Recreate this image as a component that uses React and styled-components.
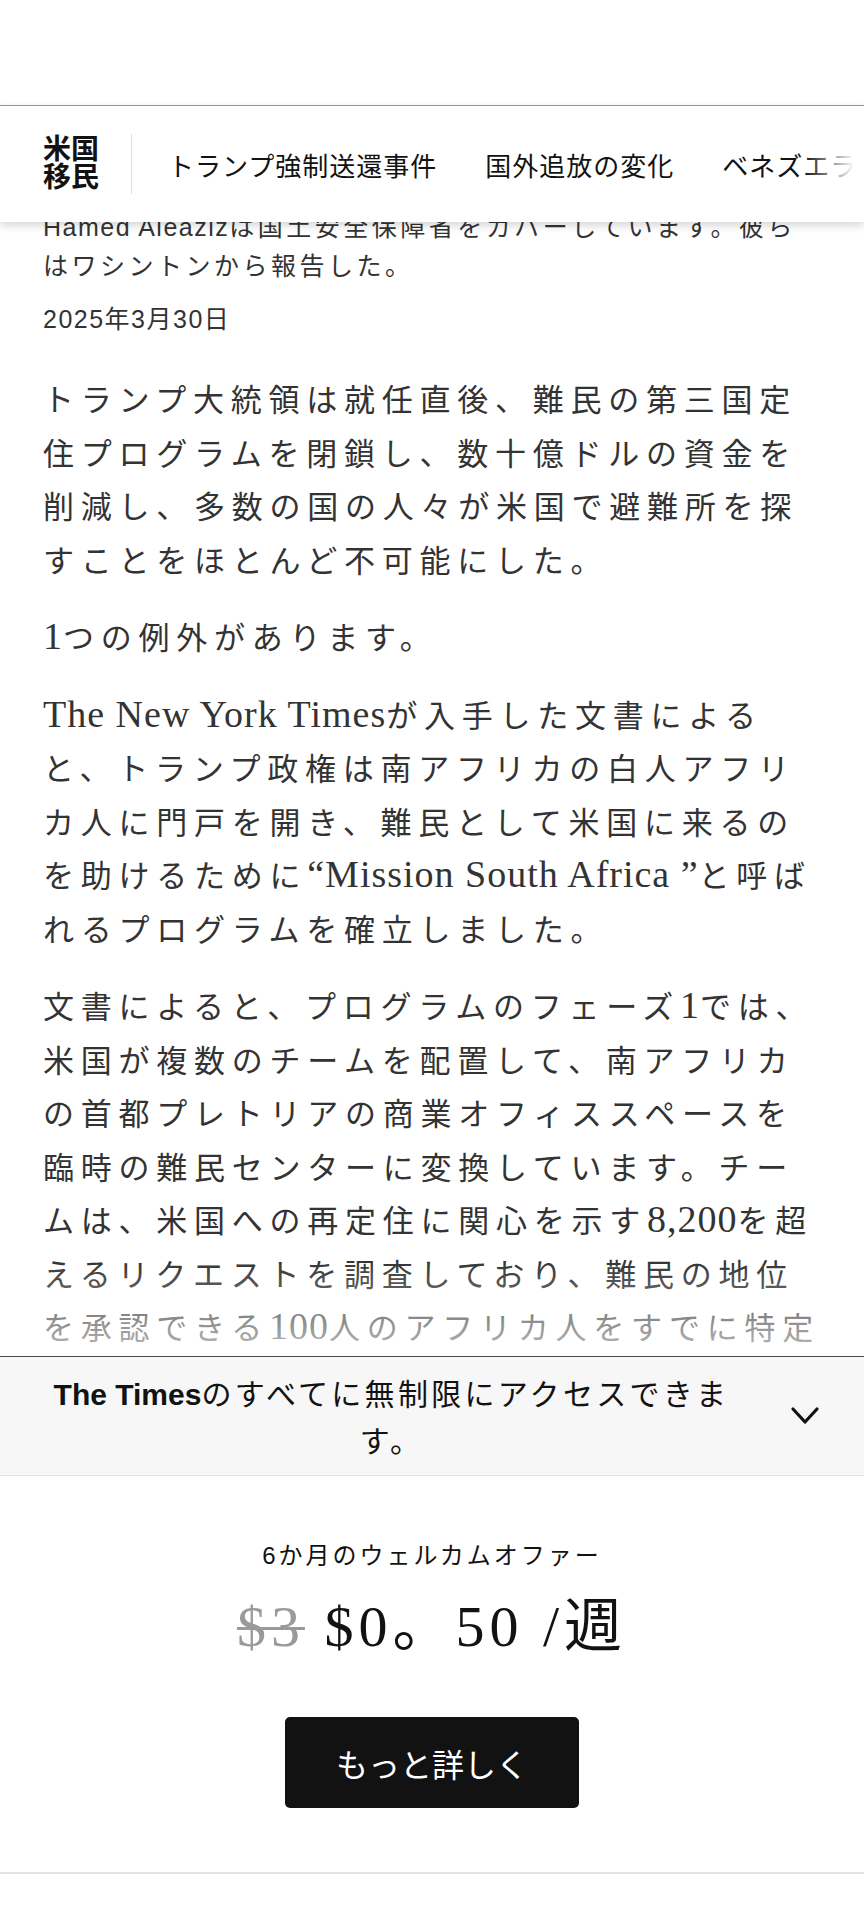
import React from "react";
import styled, { createGlobalStyle } from "styled-components";

const Global = createGlobalStyle`
  html, body { margin: 0; padding: 0; background: #fff; }
  body {
    font-family: "Liberation Sans", "Noto Sans CJK JP", sans-serif;
    color: #121212;
  }
  * { box-sizing: border-box; }
`;

const Page = styled.div`
  width: 864px;
  height: 1920px;
  overflow: hidden;
  display: flex;
  flex-direction: column;
  background: #fff;
`;

const TopSpace = styled.div`
  height: 106px;
  flex-shrink: 0;
  border-bottom: 1px solid #9a9a9a;
`;

const Header = styled.header`
  position: relative;
  z-index: 2;
  height: 116px;
  flex-shrink: 0;
  display: flex;
  align-items: center;
  padding-left: 43px;
  background: #fff;
  box-shadow: 0 3px 9px rgba(0, 0, 0, 0.18);
  overflow: hidden;
  &::after {
    content: "";
    position: absolute;
    top: 0;
    right: 0;
    bottom: 0;
    width: 60px;
    background: linear-gradient(to right, rgba(255, 255, 255, 0), #fff 85%);
  }
`;

const Logo = styled.div`
  font-family: "Noto Sans CJK JP", sans-serif;
  font-weight: 700;
  font-size: 28px;
  line-height: 28px;
  color: #121212;
  flex-shrink: 0;
  margin-top: -6px;
`;

const Divider = styled.div`
  width: 1px;
  height: 60px;
  background: #dcdcdc;
  margin: 0 36px 0 32px;
  flex-shrink: 0;
`;

const Nav = styled.nav`
  display: flex;
  gap: 48px;
  white-space: nowrap;
`;

const NavItem = styled.span`
  font-family: "Noto Sans CJK JP", sans-serif;
  font-size: 26px;
  letter-spacing: 1px;
  color: #121212;
`;

const Article = styled.main`
  position: relative;
  height: 1134px;
  flex-shrink: 0;
  overflow: hidden;
`;

const ArticleInner = styled.div`
  padding: 0 40px 0 43px;
  margin-top: -14px;
`;

const Byline = styled.p`
  margin: 0;
  font-size: 25px;
  line-height: 39px;
  letter-spacing: 3.5px;
  color: #333;
`;

const BylineLatin = styled.span`
  letter-spacing: 1.5px;
`;

const DateLine = styled.p`
  margin: 18px 0 0;
  font-size: 25px;
  line-height: 30px;
  letter-spacing: 1.5px;
  color: #333;
`;

const Paragraph = styled.p`
  margin: ${(p) => (p.$first ? "40px" : "24px")} 0 0;
  font-family: "Liberation Serif", "Noto Sans CJK JP", serif;
  font-weight: 400;
  font-size: 31px;
  line-height: 53.5px;
  letter-spacing: 6.75px;
  color: #333;
`;

const Latin = styled.span`
  font-family: "Liberation Serif", serif;
  font-weight: 400;
  font-size: 38px;
  line-height: 1;
  letter-spacing: 1px;
`;

const Fade = styled.div`
  position: absolute;
  left: 0;
  right: 0;
  bottom: 0;
  height: 95px;
  background: linear-gradient(
    to bottom,
    rgba(255, 255, 255, 0),
    rgba(255, 255, 255, 0.7)
  );
`;

const Paywall = styled.section`
  flex-shrink: 0;
  border-top: 1px solid #4a4a4a;
  background: #fff;
`;

const PaywallBar = styled.div`
  display: grid;
  grid-template-columns: 1fr 124px;
  align-items: center;
  background: #f7f7f7;
  border-bottom: 1px solid #e2e2e2;
  padding: 13px 0 13px 43px;
`;

const BarText = styled.p`
  margin: 0;
  text-align: center;
  font-family: "Noto Sans CJK JP", sans-serif;
  font-size: 30px;
  line-height: 45px;
  letter-spacing: 3.3px;
  color: #121212;
`;

const BarLatin = styled.span`
  font-family: "Liberation Sans", sans-serif;
  font-weight: 700;
  letter-spacing: 0;
`;

const Chevron = styled.svg`
  justify-self: center;
  margin-left: 6px;
`;

const Offer = styled.div`
  display: flex;
  flex-direction: column;
  align-items: center;
  padding: 65px 0 64px;
  border-bottom: 2px solid #e2e2e2;
`;

const OfferLabel = styled.p`
  margin: 0;
  font-family: "Liberation Sans", "Noto Sans CJK JP", sans-serif;
  font-size: 24px;
  line-height: 30px;
  letter-spacing: 3px;
  color: #121212;
`;

const Price = styled.p`
  margin: 21px 0 0;
  font-family: "Liberation Serif", "Noto Sans CJK JP", serif;
  font-size: 58px;
  line-height: 70px;
  letter-spacing: 5px;
  color: #121212;
  white-space: nowrap;
`;

const OldPrice = styled.s`
  color: #9a9a9a;
  text-decoration-thickness: 3px;
`;

const CtaButton = styled.button`
  margin-top: 55px;
  width: 294px;
  height: 91px;
  border: none;
  border-radius: 5px;
  background: #121212;
  color: #fff;
  font-family: "Noto Sans CJK JP", sans-serif;
  font-size: 32px;
  cursor: pointer;
`;

const navItems = ["トランプ強制送還事件", "国外追放の変化", "ベネズエラ人"];

export default function App() {
  return (
    <Page lang="ja">
      <Global />
      <TopSpace />
      <Header>
        <Logo>
          米国
          <br />
          移民
        </Logo>
        <Divider />
        <Nav>
          {navItems.map((n) => (
            <NavItem key={n}>{n}</NavItem>
          ))}
        </Nav>
      </Header>
      <Article>
        <ArticleInner>
          <Byline>
            <BylineLatin>Hamed Aleaziz</BylineLatin>
            は国土安全保障省をカバーしています。彼らはワシントンから報告した。
          </Byline>
          <DateLine>2025年3月30日</DateLine>
          <Paragraph $first>
            トランプ大統領は就任直後、難民の第三国定住プログラムを閉鎖し、数十億ドルの資金を削減し、多数の国の人々が米国で避難所を探すことをほとんど不可能にした。
          </Paragraph>
          <Paragraph>
            <Latin>1</Latin>つの例外があります。
          </Paragraph>
          <Paragraph>
            <Latin>The New York Times</Latin>
            が入手した文書によると、トランプ政権は南アフリカの白人アフリカ人に門戸を開き、難民として米国に来るのを助けるために
            <Latin>“Mission South Africa ”</Latin>
            と呼ばれるプログラムを確立しました。
          </Paragraph>
          <Paragraph>
            文書によると、プログラムのフェーズ<Latin>1</Latin>
            では、米国が複数のチームを配置して、南アフリカの首都プレトリアの商業オフィススペースを臨時の難民センターに変換しています。チームは、米国への再定住に関心を示す
            <Latin>8,200</Latin>
            を超えるリクエストを調査しており、難民の地位を承認できる
            <Latin>100</Latin>
            人のアフリカ人をすでに特定しています。
          </Paragraph>
        </ArticleInner>
        <Fade />
      </Article>
      <Paywall>
        <PaywallBar>
          <BarText>
            <BarLatin>The Times</BarLatin>のすべてに無制限にアクセスできます。
          </BarText>
          <Chevron width="30" height="20" viewBox="0 0 30 20" aria-hidden="true">
            <polyline
              points="3,3 15,16 27,3"
              fill="none"
              stroke="#121212"
              strokeWidth="3.2"
              strokeLinecap="round"
              strokeLinejoin="round"
            />
          </Chevron>
        </PaywallBar>
        <Offer>
          <OfferLabel>6か月のウェルカムオファー</OfferLabel>
          <Price>
            <OldPrice>$3</OldPrice> $0。50 /週
          </Price>
          <CtaButton>もっと詳しく</CtaButton>
        </Offer>
      </Paywall>
    </Page>
  );
}
